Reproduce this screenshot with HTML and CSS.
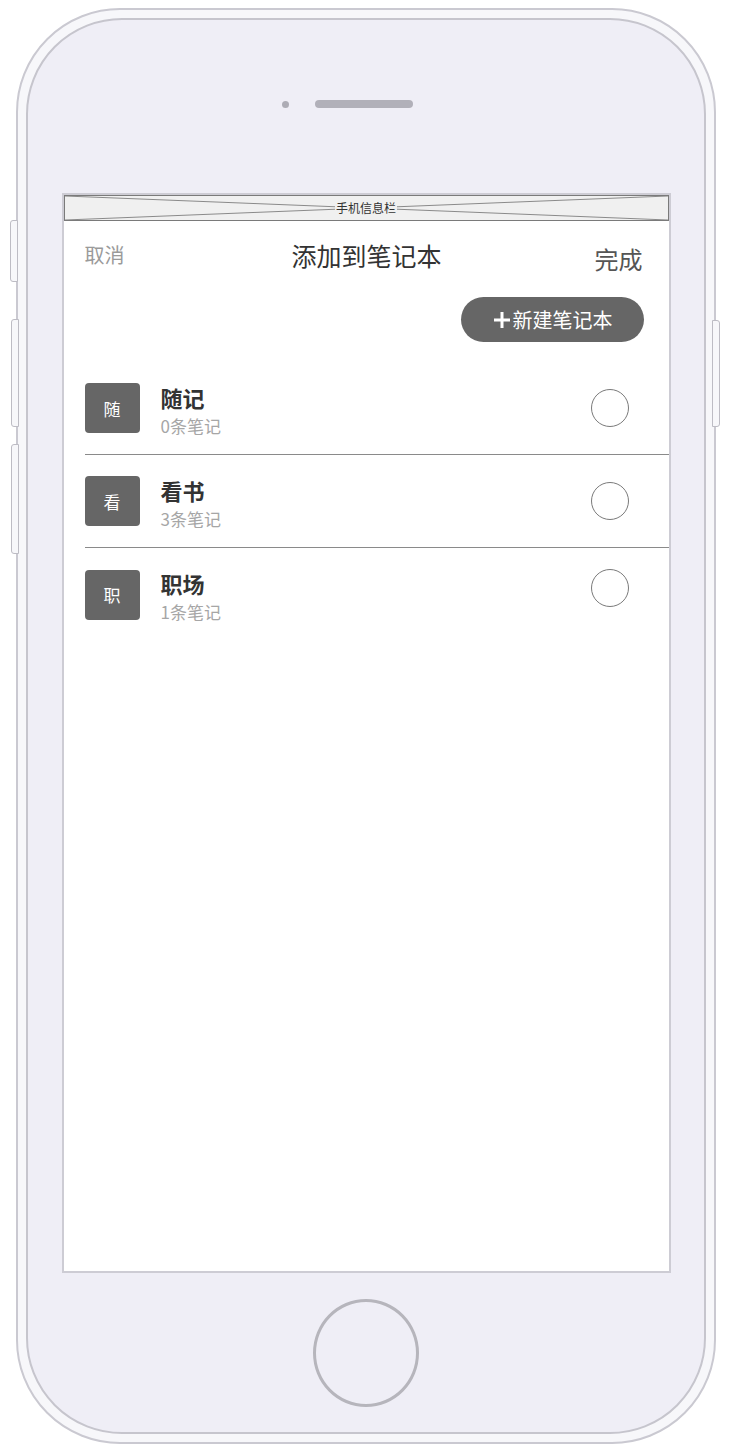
FILE: index.html
```html
<!DOCTYPE html>
<html lang="zh-CN">
<head>
<meta charset="utf-8">
<title>添加到笔记本</title>
<link rel="stylesheet" href="styles.css">
</head>
<body>
<div class="page">
  <div class="device">
    <span class="side-btn side-mute"></span>
    <span class="side-btn side-vol-up"></span>
    <span class="side-btn side-vol-down"></span>
    <span class="side-btn side-power"></span>
    <div class="body">
      <div class="speaker-row">
        <span class="camera"></span>
        <span class="speaker"></span>
      </div>
      <div class="screen">
        <div class="statusbar">
          <svg class="statusbar-x" viewBox="0 0 100 10" preserveAspectRatio="none">
            <line x1="0" y1="0" x2="100" y2="10" stroke="#8a8a8a" stroke-width="1" vector-effect="non-scaling-stroke"/>
            <line x1="0" y1="10" x2="100" y2="0" stroke="#8a8a8a" stroke-width="1" vector-effect="non-scaling-stroke"/>
          </svg>
          <span class="statusbar-text">手机信息栏</span>
        </div>
        <div class="header">
          <span class="cancel">取消</span>
          <span class="title">添加到笔记本</span>
          <span class="done">完成</span>
        </div>
        <div class="action-row">
          <button class="new-btn">
            <svg class="plus" viewBox="0 0 16 16" width="16" height="16">
              <rect x="6.5" y="0" width="3" height="16" fill="#fff"/>
              <rect x="0" y="6.5" width="16" height="3" fill="#fff"/>
            </svg>
            <span>新建笔记本</span>
          </button>
        </div>
        <ul class="list">
          <li class="row">
            <span class="badge">随</span>
            <div class="info">
              <div class="name">随记</div>
              <div class="count">0条笔记</div>
            </div>
            <span class="radio"></span>
          </li>
          <li class="row">
            <span class="badge">看</span>
            <div class="info">
              <div class="name">看书</div>
              <div class="count">3条笔记</div>
            </div>
            <span class="radio"></span>
          </li>
          <li class="row">
            <span class="badge">职</span>
            <div class="info">
              <div class="name">职场</div>
              <div class="count">1条笔记</div>
            </div>
            <span class="radio radio-raised"></span>
          </li>
        </ul>
      </div>
      <div class="home"></div>
    </div>
  </div>
</div>
</body>
</html>
```
FILE: styles.css
```css
* { box-sizing: border-box; }
html, body {
  margin: 0;
  padding: 0;
  background: #ffffff;
}
body {
  font-family: "Noto Sans CJK SC", "Noto Sans", "Liberation Sans", sans-serif;
}
.page {
  width: 738px;
  height: 1450px;
  overflow: hidden;
  padding-top: 8px;
  padding-left: 16px;
}
.device {
  position: relative;
  width: 700px;
  height: 1436px;
  border: 2px solid #cac9d1;
  border-radius: 104px;
  padding: 8px;
  background: #f7f7fa;
}
.side-btn {
  position: absolute;
  width: 8px;
  background: #f7f7fa;
  border: 1px solid #bdbcc4;
}
.side-mute { left: -8px; top: 210px; height: 62px; border-radius: 3px 0 0 3px; }
.side-vol-up { left: -7px; top: 309px; height: 108px; border-radius: 3px 0 0 3px; }
.side-vol-down { left: -7px; top: 434px; height: 110px; border-radius: 3px 0 0 3px; }
.side-power { right: -6px; top: 310px; height: 107px; border-radius: 0 3px 3px 0; }

.body {
  height: 100%;
  border: 2px solid #c6c5cd;
  border-radius: 96px;
  background: #efeef6;
  display: flex;
  flex-direction: column;
  align-items: center;
}
.speaker-row {
  align-self: flex-start;
  display: flex;
  align-items: center;
  gap: 26px;
  margin-top: 80px;
  margin-left: 254px;
  height: 8px;
}
.camera {
  width: 7px;
  height: 7px;
  border-radius: 50%;
  background: #adacb5;
}
.speaker {
  width: 98px;
  height: 8px;
  border-radius: 4px;
  background: #b1b0b9;
}
.screen {
  margin-top: 85px;
  width: 609px;
  height: 1080px;
  border: 2px solid #cdccd4;
  background: #ffffff;
  display: flex;
  flex-direction: column;
}
.statusbar {
  position: relative;
  height: 26px;
  background: #f0f0f0;
  border: 1px solid #7a7a7a;
  display: flex;
  align-items: center;
  justify-content: center;
}
.statusbar-x {
  position: absolute;
  left: 0;
  top: 0;
  width: 100%;
  height: 100%;
}
.statusbar-text {
  position: relative;
  font-size: 12px;
  line-height: 14px;
  color: #333;
  background: #f0f0f0;
  padding: 0 1px;
}
.header {
  display: grid;
  grid-template-columns: 1fr auto 1fr;
  align-items: start;
  padding: 18px 26px 0 21px;
}
.cancel {
  margin-top: 2px;
  font-size: 20px;
  line-height: 28px;
  color: #9a9a9a;
}
.title {
  margin-left: 6px;
  font-size: 25px;
  line-height: 32px;
  color: #333;
}
.done {
  justify-self: end;
  margin-top: 4px;
  font-size: 24px;
  line-height: 32px;
  color: #555;
}
.action-row {
  display: flex;
  justify-content: flex-end;
  padding-right: 25px;
  margin-top: 22px;
}
.new-btn {
  width: 183px;
  height: 45px;
  border: none;
  border-radius: 23px;
  background: #666666;
  color: #fff;
  font-family: inherit;
  font-size: 20px;
  display: flex;
  align-items: center;
  justify-content: center;
  gap: 3px;
  padding: 0 0 0 2px;
}
.plus { display: block; }
.list {
  list-style: none;
  margin: 20px 0 0 21px;
  padding: 0;
}
.row {
  height: 93px;
  display: flex;
  align-items: center;
  padding-right: 40px;
  border-bottom: 1px solid #8a8a8a;
}
.row:last-child { border-bottom: none; }
.badge {
  width: 55px;
  height: 50px;
  border-radius: 4px;
  background: #666666;
  color: #fff;
  font-size: 17px;
  display: flex;
  align-items: center;
  justify-content: center;
}
.info {
  flex: 1;
  margin-left: 21px;
  margin-top: 3px;
}
.name {
  font-size: 22px;
  line-height: 30px;
  font-weight: 700;
  color: #333;
}
.count {
  margin-top: 2px;
  font-size: 17px;
  line-height: 24px;
  color: #a6a6a6;
}
.radio {
  width: 38px;
  height: 38px;
  border-radius: 50%;
  border: 1px solid #7a7a7a;
}
.radio-raised { margin-bottom: 14px; }
.home {
  margin-top: 26px;
  width: 106px;
  height: 108px;
  border-radius: 50%;
  border: 3px solid #b6b5bc;
}
```
